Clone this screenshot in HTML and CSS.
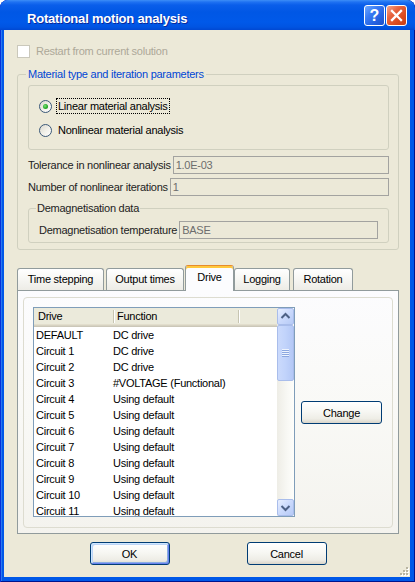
FILE: index.html
```html
<!DOCTYPE html>
<html>
<head>
<meta charset="utf-8">
<title>Rotational motion analysis</title>
<link rel="stylesheet" href="styles.css">
</head>
<body>
<div class="window">
  <div class="titlebar">
    <span class="title">Rotational motion analysis</span>
    <div class="caption-btns">
      <span class="cbtn help">?</span>
      <span class="cbtn close"><svg width="19" height="19" viewBox="0 0 19 19"><path d="M5 5 L14 14 M14 5 L5 14" stroke="#fff" stroke-width="2.3" stroke-linecap="square"/></svg></span>
    </div>
  </div>
  <div class="client">
    <div class="check-row disabled"><span class="checkbox"></span><span>Restart from current solution</span></div>

    <fieldset class="group main-group">
      <legend class="legend-blue">Material type and iteration parameters</legend>
      <div class="radio-box">
        <div class="radio-row"><span class="radio checked"></span><span class="radio-label focus">Linear material analysis</span></div>
        <div class="radio-row"><span class="radio"></span><span class="radio-label">Nonlinear material analysis</span></div>
      </div>
      <div class="fields">
        <div class="field-row"><span class="field-label">Tolerance in nonlinear analysis</span><span class="edit">1.0E-03</span></div>
        <div class="field-row"><span class="field-label">Number of nonlinear iterations</span><span class="edit">1</span></div>
      </div>
      <fieldset class="group demag-group">
        <legend class="legend-plain">Demagnetisation data</legend>
        <div class="field-row"><span class="field-label">Demagnetisation temperature</span><span class="edit">BASE</span></div>
      </fieldset>
    </fieldset>

    <div class="tabs">
      <div class="tab-strip">
        <span class="tab tab-time">Time stepping</span>
        <span class="tab tab-output">Output times</span>
        <span class="tab tab-drive selected">Drive</span>
        <span class="tab tab-logging">Logging</span>
        <span class="tab tab-rotation">Rotation</span>
      </div>
      <div class="tab-panel">
        <div class="panel-box">
          <div class="listview">
            <div class="list-main">
              <div class="list-head">
                <span class="hcell c1">Drive</span><span class="hsep"></span>
                <span class="hcell c2">Function</span><span class="hsep"></span>
                <span class="hcell c3"></span>
              </div>
              <div class="list-rows">
                <div class="row"><span class="cell c1">DEFAULT</span><span class="cell c2">DC drive</span></div>
                <div class="row"><span class="cell c1">Circuit 1</span><span class="cell c2">DC drive</span></div>
                <div class="row"><span class="cell c1">Circuit 2</span><span class="cell c2">DC drive</span></div>
                <div class="row"><span class="cell c1">Circuit 3</span><span class="cell c2">#VOLTAGE (Functional)</span></div>
                <div class="row"><span class="cell c1">Circuit 4</span><span class="cell c2">Using default</span></div>
                <div class="row"><span class="cell c1">Circuit 5</span><span class="cell c2">Using default</span></div>
                <div class="row"><span class="cell c1">Circuit 6</span><span class="cell c2">Using default</span></div>
                <div class="row"><span class="cell c1">Circuit 7</span><span class="cell c2">Using default</span></div>
                <div class="row"><span class="cell c1">Circuit 8</span><span class="cell c2">Using default</span></div>
                <div class="row"><span class="cell c1">Circuit 9</span><span class="cell c2">Using default</span></div>
                <div class="row"><span class="cell c1">Circuit 10</span><span class="cell c2">Using default</span></div>
                <div class="row"><span class="cell c1">Circuit 11</span><span class="cell c2">Using default</span></div>
              </div>
            </div>
            <div class="scrollbar">
              <span class="sb-btn"><svg width="15" height="15" viewBox="0 0 15 15"><path d="M3.5 9 L7.5 5 L11.5 9" fill="none" stroke="#4D6185" stroke-width="2"/></svg></span>
              <span class="sb-thumb"><span class="grip-lines"></span></span>
              <span class="sb-btn down"><svg width="15" height="15" viewBox="0 0 15 15"><path d="M3.5 6 L7.5 10 L11.5 6" fill="none" stroke="#4D6185" stroke-width="2"/></svg></span>
            </div>
          </div>
          <button class="btn change-btn">Change</button>
        </div>
      </div>
    </div>

    <div class="dialog-buttons">
      <button class="btn default">OK</button>
      <button class="btn">Cancel</button>
    </div>
    <svg class="size-grip" width="11" height="11" viewBox="0 0 11 11">
      <g fill="#fff"><rect x="9" y="3" width="2" height="2"/><rect x="6" y="6" width="2" height="2"/><rect x="9" y="6" width="2" height="2"/><rect x="3" y="9" width="2" height="2"/><rect x="6" y="9" width="2" height="2"/><rect x="9" y="9" width="2" height="2"/></g>
      <g fill="#B8B4A2"><rect x="8" y="2" width="2" height="2"/><rect x="5" y="5" width="2" height="2"/><rect x="8" y="5" width="2" height="2"/><rect x="2" y="8" width="2" height="2"/><rect x="5" y="8" width="2" height="2"/><rect x="8" y="8" width="2" height="2"/></g>
    </svg>
  </div>
</div>
</body>
</html>
```
FILE: styles.css
```css
* { box-sizing: border-box; }
html, body { margin: 0; padding: 0; }
body {
  width: 415px;
  height: 582px;
  overflow: hidden;
  background: #ffffff;
  font-family: "Liberation Sans", Arial, sans-serif;
  font-size: 11px;
  letter-spacing: -0.25px;
  color: #000;
}

.window {
  width: 415px;
  height: 582px;
  display: flex;
  flex-direction: column;
  background: #0058E8;
  border-radius: 8px 8px 0 0;
  overflow: hidden;
  box-shadow: inset 1px 0 0 #0831D9, inset -1px 0 0 #00138C, inset 0 -1px 0 #00138C, inset 2px 0 0 #2A78F0;
}

.titlebar {
  flex: none;
  height: 30px;
  display: flex;
  align-items: center;
  padding: 0 8px 0 27px;
  background: linear-gradient(180deg, #3D8EF7 0px, #1F72F2 2px, #0A5EEA 5px, #0057E5 12px, #0059E9 22px, #0054E2 27px, #0048D2 30px);
  border-radius: 8px 8px 0 0;
}
.title {
  flex: 1;
  padding-top: 6px;
  color: #fff;
  font-weight: bold;
  font-size: 13px;
  letter-spacing: -0.2px;
  text-shadow: 1px 1px 0 #0A2A9C;
}
.caption-btns { display: flex; gap: 1px; }
.cbtn {
  width: 21px;
  height: 21px;
  border: 1px solid #fff;
  border-radius: 3px;
  display: flex;
  align-items: center;
  justify-content: center;
  color: #fff;
}
.help {
  background: linear-gradient(135deg, #6EA8FF 0%, #3A7CF4 35%, #2360E0 70%, #1E4FC8 100%);
  font-weight: bold;
  font-size: 16px;
  letter-spacing: 0;
  line-height: 19px;
}
.close {
  background: linear-gradient(135deg, #F4A88C 0%, #E7643F 35%, #DA4A1E 70%, #C63E14 100%);
}

.client {
  position: relative;
  flex: 1;
  margin: 0 5px 5px 4px;
  padding: 0 11px 0 13px;
  background: #ECE9D8;
  display: flex;
  flex-direction: column;
}

.check-row {
  display: flex;
  align-items: center;
  gap: 6px;
  height: 13px;
  margin-top: 15px;
  line-height: 13px;
}
.check-row.disabled { color: #ACA899; }
.checkbox {
  width: 13px;
  height: 13px;
  flex: none;
  border: 1px solid #CAC8BB;
  background: #fff;
}

fieldset.group {
  margin: 0;
  border: 1px solid #D0D0BF;
  border-radius: 3px;
  min-width: 0;
}
fieldset.main-group {
  margin-top: 10px;
  padding: 4px 9px 6px 10px;
}
.group legend {
  height: 13px;
  line-height: 13px;
  padding: 0 2px;
}
.legend-blue { color: #0046D5; margin-left: -2px; }
.group .legend-plain { color: #222; margin-left: -3px; padding: 0 1px; }

.radio-box {
  border: 1px solid #D0D0BF;
  border-radius: 3px;
  padding: 12px 10px 11px 10px;
  display: flex;
  flex-direction: column;
  gap: 8px;
}
.radio-row {
  display: flex;
  align-items: center;
  height: 16px;
  gap: 4px;
}
.radio {
  position: relative;
  width: 13px;
  height: 13px;
  flex: none;
  border-radius: 50%;
  border: 1px solid #3A5878;
  background: linear-gradient(135deg, #DCD9CF 0%, #F2F1EA 55%, #FFFFFF 100%);
}
.radio.checked::after {
  content: "";
  position: absolute;
  left: 3px;
  top: 3px;
  width: 5px;
  height: 5px;
  border-radius: 50%;
  background: radial-gradient(circle at 40% 40%, #7FE07F 0%, #2DB12D 50%, #16881A 100%);
}
.radio-label {
  padding: 0 1px;
  line-height: 14px;
  border: 1px solid transparent;
}
.radio-label.focus { border: 1px dotted #000; }

.fields {
  display: flex;
  flex-direction: column;
  gap: 4px;
  margin-top: 6px;
}
.field-row {
  display: flex;
  align-items: center;
  height: 18px;
}
.field-label {
  margin-right: 2px;
  color: #222;
  white-space: nowrap;
}
.edit {
  flex: 1;
  height: 18px;
  border: 1px solid #A3A3A0;
  padding-left: 2px;
  line-height: 16px;
  color: #6D6D6D;
  background: #ECE9D8;
}

fieldset.demag-group {
  margin-top: 6px;
  padding: 6px 10px 3px 10px;
}

.tabs {
  margin-top: 15px;
  display: flex;
  flex-direction: column;
}
.tab-strip {
  height: 25px;
  display: flex;
  align-items: flex-end;
}
.tab {
  height: 22px;
  border: 1px solid #919B9C;
  border-bottom: none;
  border-radius: 3px 3px 0 0;
  background: linear-gradient(180deg, #FFFFFF 0%, #F7F7F4 45%, #EDECE6 100%);
  text-align: center;
  line-height: 20px;
  white-space: nowrap;
}
.tab-time { width: 87px; margin-right: 2px; }
.tab-output { width: 78px; margin-right: 1px; }
.tab-drive { width: 49px; }
.tab-logging { width: 56px; margin-right: 3px; }
.tab-rotation { width: 60px; }
.tab.selected {
  position: relative;
  z-index: 1;
  height: 26px;
  margin-bottom: -1px;
  background: #FCFCFE;
  border-top-color: #E68B2C;
  box-shadow: inset 0 2px 0 #FFC83C;
  padding-top: 1px;
  line-height: 20px;
}

.tab-panel {
  height: 244px;
  border: 1px solid #919B9C;
  background: linear-gradient(180deg, #FCFCFE 0%, #F9F9F6 50%, #F4F3EE 100%);
  padding: 6px 5px 5px 5px;
}
.panel-box {
  height: 100%;
  border: 1px solid #DDDCD0;
  border-radius: 4px;
  display: flex;
  align-items: flex-start;
  padding: 9px 0 0 9px;
}

.listview {
  width: 262px;
  height: 210px;
  border: 1px solid #7F9DB9;
  background: #fff;
  display: flex;
  overflow: hidden;
}
.list-main {
  flex: 1;
  display: flex;
  flex-direction: column;
  overflow: hidden;
}
.list-head {
  flex: none;
  height: 19px;
  display: flex;
  align-items: center;
  padding-bottom: 2px;
  background: #EBEADB;
  box-shadow: inset 0 -1px 0 #CBC7B8, inset 0 -2px 0 #D6D2C2, inset 0 -3px 0 #E2DECD;
}
.hcell { line-height: 15px; white-space: nowrap; }
.hcell.c1 { width: 79px; padding-left: 4px; }
.hcell.c2 { width: 123px; padding-left: 2px; }
.hcell.c3 { flex: 1; }
.hsep {
  width: 2px;
  height: 13px;
  flex: none;
  border-left: 1px solid #C7C5B2;
  border-right: 1px solid #fff;
}
.list-rows { flex: 1; overflow: hidden; }
.row {
  display: flex;
  height: 16px;
  line-height: 16px;
  white-space: nowrap;
}
.cell.c1 { width: 79px; padding-left: 2px; }
.cell.c2 { flex: 1; }

.scrollbar {
  width: 17px;
  flex: none;
  display: flex;
  flex-direction: column;
  background: linear-gradient(90deg, #EEEDE6 0%, #F8F8F4 60%, #FEFEFB 100%);
}
.sb-btn {
  width: 17px;
  height: 17px;
  display: flex;
  align-items: center;
  justify-content: center;
  border: 1px solid #A9BDEB;
  border-radius: 2px;
  background: linear-gradient(135deg, #E8EFFF 0%, #CAD9FC 50%, #B6CAF6 100%);
}
.sb-btn.down { margin-top: auto; }
.sb-thumb {
  height: 56px;
  display: flex;
  align-items: center;
  justify-content: center;
  border: 1px solid #A9BDEB;
  border-radius: 2px;
  background: linear-gradient(90deg, #CBDAFC 0%, #C1D3FB 50%, #B4C8F6 100%);
}
.grip-lines {
  width: 7px;
  height: 8px;
  background: repeating-linear-gradient(180deg, #EEF4FE 0px, #EEF4FE 1px, #8CA7E0 1px, #8CA7E0 2px);
}

.btn {
  font-family: "Liberation Sans", Arial, sans-serif;
  font-size: 11px;
  letter-spacing: -0.25px;
  color: #000;
  height: 23px;
  border: 1px solid #003C74;
  border-radius: 3px;
  background: linear-gradient(180deg, #FFFFFF 0%, #F7F7F3 45%, #EEEDE6 80%, #D9D5CA 100%);
  padding: 0;
  margin: 0;
}
.change-btn {
  width: 81px;
  margin-left: 6px;
  align-self: center;
  margin-top: -9px;
}
.dialog-buttons {
  display: flex;
  justify-content: center;
  gap: 77px;
  margin-top: 8px;
}
.dialog-buttons .btn { width: 80px; }
.btn.default {
  box-shadow: inset 1px 1px 0 #CEE7FF, inset -1px -1px 0 #6982EE, inset 2px 2px 0 #BCD4F6, inset -2px -2px 0 #89ADE4;
}

.size-grip {
  position: absolute;
  right: 1px;
  bottom: 1px;
}
```
